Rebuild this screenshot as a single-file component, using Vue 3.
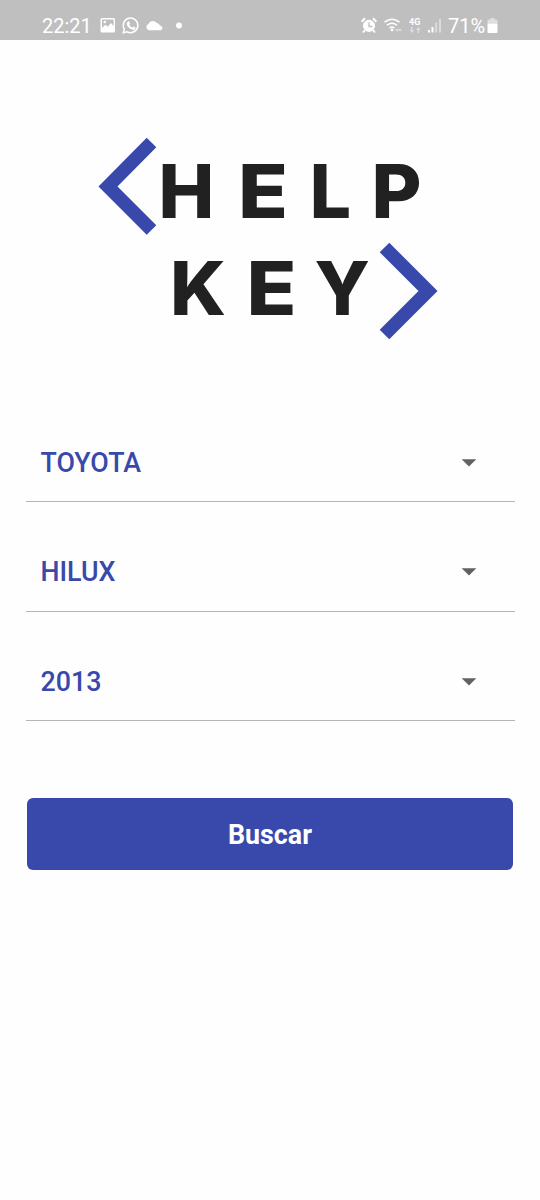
<template>
  <div class="screen">
    <header class="status-bar">
      <span class="clock">22:21</span>
      <svg class="status-left" width="90" height="20" viewBox="0 0 90 20">
        <path fill="#fff" fill-rule="evenodd" d="M2 2h11.500a1.500 1.500 0 0 1 1.500 1.500v11.500a1.500 1.500 0 0 1-1.500 1.500h-11.500a1.500 1.500 0 0 1-1.500-1.500v-11.500a1.500 1.500 0 0 1 1.500-1.500zM2 3.400v8.400l3.500-3 2.300 2 3.200-3.800 2.600 3v-6.600z"/>
        <circle cx="4.800" cy="6" r="1.300" fill="#fff"/>
        <path fill="none" stroke="#fff" stroke-width="1.500" d="M23.300 16.800l1-3.700a7.300 7.300 0 1 1 2.900 2.700z"/>
        <path fill="#fff" d="M27.800 5.700c.7-.7 1.400-.5 1.700.2l.7 1.600-.9 1.300c.8 1.500 1.700 2.200 3 2.800l1.100-1.200 2.100 1c.5.400-.3 2.300-1.900 2.500-3.600.2-7.700-4.400-6.800-6.800z"/>
        <path fill="#fff" d="M49 14.200a3.200 3.200 0 0 1-.6-6.100 4.700 4.700 0 0 1 8.300-1.200 3.300 3.300 0 0 1 3.100 2.700c3.400.5 3.200 4.300 1 4.600z"/>
        <circle cx="79" cy="9.500" r="3" fill="#fff"/>
      </svg>
      <svg class="status-right" width="84" height="20" viewBox="0 0 84 20">
        <g fill="none" stroke="#fff">
          <circle cx="9" cy="9.800" r="5.600" fill="#fff"/>
          <path stroke-width="2" d="M1.600 5.700l3.400-3.500M13 2.200l3.400 3.500M5 14l-2 2.500M13 14l2 2.500"/>
          <path stroke="#bfbfbf" stroke-width="1.300" d="M9 6.300v4.200h3.400"/>
          <path stroke-width="1.500" d="M24.500 6.200q7.500-6 15 0M27 9.200q5-4 10 0M29.500 12q2.500-2 5 0"/>
        </g>
        <circle cx="32" cy="14" r="1.400" fill="#fff"/>
        <path fill="#fff" opacity=".45" d="M35 13h4l-2 3zM38 15l2-3 2 3zM49.500 14h1.600v-3h1.600v3h1.600l-2.400 3zM56 14l2.400-3 2.400 3h-1.600v3h-1.600v-3z"/>
        <text class="network" x="49" y="8.500">4G</text>
        <path fill="#fff" d="M68 14h2v2.500h-2zM71.500 11h2v5.500h-2z"/>
        <path fill="#fff" opacity=".45" d="M75.200 6.500h2v10h-2zM79 3h2v13.500h-2z"/>
      </svg>
      <span class="percent">71%</span>
      <svg class="battery" width="12" height="18" viewBox="0 0 12 18">
        <path fill="#fff" opacity=".5" d="M3.500 1h4v1.500h2a1 1 0 0 1 1 1v3h-10v-3a1 1 0 0 1 1-1h2z"/>
        <path fill="#fff" d="M.5 6.500h10v8.500a1 1 0 0 1-1 1h-8a1 1 0 0 1-1-1z"/>
      </svg>
    </header>

    <main class="content">
      <svg class="logo" width="340" height="204" viewBox="0 0 340 204" role="img" aria-label="Help Key">
        <g class="bracket">
          <path d="M53.500 5.500L10 49.500l43.500 43.500"/>
          <path d="M286.500 110.500l43.500 43.500-43.500 43.500"/>
        </g>
        <text
          v-for="(letter, i) in letters"
          :key="i"
          class="letter"
          :transform="`translate(${letter.x} ${letter.y}) scale(${letter.stretch} 1)`"
        >{{ letter.char }}</text>
      </svg>

      <form class="search" @submit.prevent>
        <button v-for="field in fields" :key="field.name" type="button" class="field">
          <span>{{ field.value }}</span>
          <svg width="16" height="8" viewBox="0 0 16 8">
            <path d="M.7.300h14.600L8 7.600z" fill="#616161"/>
          </svg>
        </button>
        <button type="submit" class="submit">Buscar</button>
      </form>
    </main>
  </div>
</template>

<script setup>
import { ref } from "vue";

// wide geometric lettering, each glyph placed on its own
const letters = [
  { char: 'H', x: 60.5, y: 81.4, stretch: 1 },
  { char: 'E', x: 140, y: 81.4, stretch: 1.1 },
  { char: 'L', x: 211.8, y: 81.4, stretch: 0.98 },
  { char: 'P', x: 273.5, y: 81.4, stretch: 1.03 },
  { char: 'K', x: 72, y: 178, stretch: 1.02 },
  { char: 'E', x: 148.5, y: 178, stretch: 1.1 },
  { char: 'Y', x: 216.5, y: 178, stretch: 0.99 },
]

const fields = ref([
  { name: 'marca', value: 'TOYOTA' },
  { name: 'modelo', value: 'HILUX' },
  { name: 'ano', value: '2013' },
])
</script>

<style>
body {
  margin: 0;
  background: #fff;
}
</style>

<style scoped>
.screen {
  width: 540px;
  height: 1200px;
  overflow: hidden;
  background: #fefefe;
  font-family: Roboto, sans-serif;
}
.status-bar {
  display: flex;
  align-items: center;
  box-sizing: border-box;
  height: 40px;
  padding: 12px 0 0 42px;
  background: #bfbfbf;
  color: #fff;
  font-size: 20px;
  line-height: 28px;
}
.clock {
  width: 57px;
}
.status-left {
  margin-left: 0.500px;
}
.status-right {
  margin-left: 170.500px;
}
.network {
  fill: #fff;
  font-size: 9px;
  font-weight: 700;
}
.percent {
  width: 39px;
  margin-left: 4px;
}
.content {
  display: flex;
  flex-direction: column;
  align-items: center;
  padding-top: 97px;
}
.logo {
  margin-right: 4px;
}
.bracket {
  fill: none;
  stroke: #3949ab;
  stroke-width: 13.500px;
}
.letter {
  fill: #212121;
  font-family: Inter, sans-serif;
  font-size: 74.500px;
  font-weight: 800;
}
.search {
  width: 489px;
  margin-top: 83px;
}
.field {
  display: flex;
  align-items: center;
  justify-content: space-between;
  box-sizing: border-box;
  width: 100%;
  height: 78px;
  margin-bottom: 31.500px;
  padding: 0 37.500px 0 15px;
  border: none;
  border-bottom: 1.500px solid #b5b5b5;
  background: none;
  color: #3949ab;
  font: 500 26.800px Roboto, sans-serif;
}
.submit {
  display: block;
  width: 486px;
  height: 72px;
  margin: 76.500px auto 0;
  padding: 2px 0 0;
  border: none;
  border-radius: 6px;
  background: #3949ab;
  color: #fff;
  font: 700 26.800px Roboto, sans-serif;
}
</style>
